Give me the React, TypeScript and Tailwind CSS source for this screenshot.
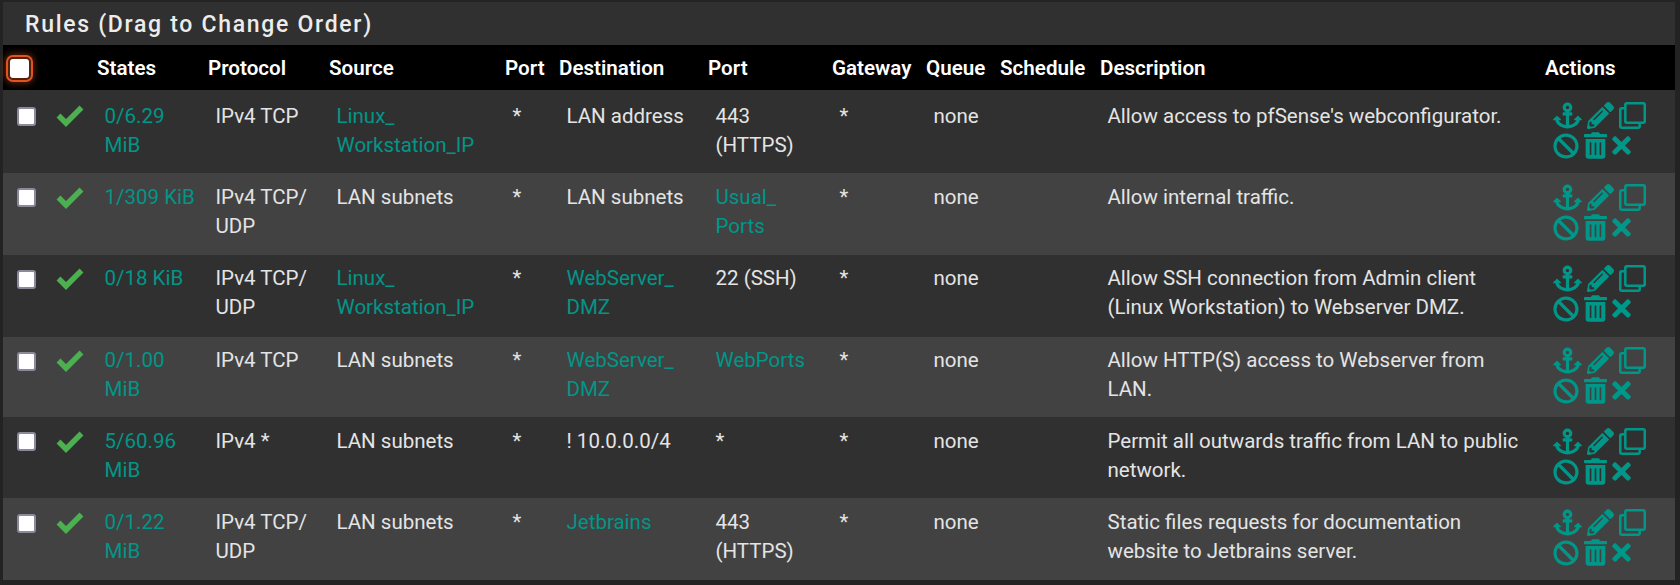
import React from "react";
import { FaAnchor, FaPencilAlt, FaRegClone, FaBan, FaTrashAlt, FaTimes } from "react-icons/fa";

type Cell = { t: string; link?: boolean };
const L = (t: string): Cell => ({ t, link: true });
const T = (t: string): Cell => ({ t });

const rows: Cell[][] = [
  [L("0/6.29\nMiB"), T("IPv4 TCP"), L("Linux_\nWorkstation_IP"), T("*"), T("LAN address"), T("443\n(HTTPS)"), T("*"), T("none"), T(""), T("Allow access to pfSense's webconfigurator.")],
  [L("1/309 KiB"), T("IPv4 TCP/\nUDP"), T("LAN subnets"), T("*"), T("LAN subnets"), L("Usual_\nPorts"), T("*"), T("none"), T(""), T("Allow internal traffic.")],
  [L("0/18 KiB"), T("IPv4 TCP/\nUDP"), L("Linux_\nWorkstation_IP"), T("*"), L("WebServer_\nDMZ"), T("22 (SSH)"), T("*"), T("none"), T(""), T("Allow SSH connection from Admin client\n(Linux Workstation) to Webserver DMZ.")],
  [L("0/1.00\nMiB"), T("IPv4 TCP"), T("LAN subnets"), T("*"), L("WebServer_\nDMZ"), L("WebPorts"), T("*"), T("none"), T(""), T("Allow HTTP(S) access to Webserver from\nLAN.")],
  [L("5/60.96\nMiB"), T("IPv4 *"), T("LAN subnets"), T("*"), T("! 10.0.0.0/4"), T("*"), T("*"), T("none"), T(""), T("Permit all outwards traffic from LAN to public\nnetwork.")],
  [L("0/1.22\nMiB"), T("IPv4 TCP/\nUDP"), T("LAN subnets"), T("*"), L("Jetbrains"), T("443\n(HTTPS)"), T("*"), T("none"), T(""), T("Static files requests for documentation\nwebsite to Jetbrains server.")],
];

const heads = ["States", "Protocol", "Source", "Port", "Destination", "Port", "Gateway", "Queue", "Schedule", "Description", "Actions"];

const rowClass = [
  "h-[83px] bg-[#303030]",
  "h-[82px] bg-[#424242]",
  "h-[82px] bg-[#303030]",
  "h-[80px] bg-[#424242]",
  "h-[81px] bg-[#303030]",
  "h-[82px] bg-[#424242]",
];
const padClass = ["pt-[12px]", "pt-[10px]", "pt-[9px]", "pt-[9px]", "pt-[10px]", "pt-[10px]"];
const boxClass = ["pt-[17px]", "pt-[15px]", "pt-[15px]", "pt-[15px]", "pt-[15px]", "pt-[16px]"];
const checkClass = ["pt-[15px]", "pt-[14px]", "pt-[13px]", "pt-[13px]", "pt-[14px]", "pt-[14px]"];

function Check() {
  return (
    <svg width="28" height="22" viewBox="0 0 28 22" fill="none" stroke="#4caf50" strokeWidth="5.5" strokeLinejoin="miter">
      <polyline points="2.5,10.5 10,18 25.5,2.5" />
    </svg>
  );
}

export default function App() {
  return (
    <div className="w-[1680px] h-[585px] bg-[#232323] pt-[2px] pl-[3px] overflow-hidden font-['Roboto',sans-serif] text-[20.5px] leading-[29px] text-[#e4e4e4]">
      <div className="w-[1672px] h-[578px] bg-[#303030]">
        <h2 className="h-[43px] pl-[22px] pt-[2px] flex items-center text-[23px] font-medium tracking-[1.7px] text-[#ececec]">
          Rules (Drag to Change Order)
        </h2>
        <table className="w-[1672px] table-fixed border-collapse">
          <colgroup>
            <col className="w-[42px]" />
            <col className="w-[52px]" />
            <col className="w-[111px]" />
            <col className="w-[121px]" />
            <col className="w-[176px]" />
            <col className="w-[54px]" />
            <col className="w-[149px]" />
            <col className="w-[124px]" />
            <col className="w-[94px]" />
            <col className="w-[74px]" />
            <col className="w-[100px]" />
            <col className="w-[445px]" />
            <col className="w-[130px]" />
          </colgroup>
          <thead>
            <tr className="h-[45px] bg-black text-white">
              <th className="p-0 pl-[7px] pt-[2px] text-left">
                <span className="block w-[19px] h-[19px] rounded-[3px] bg-white outline-2 outline-offset-2 outline-[#e2541f] shadow-[0_0_7px_5px_rgba(226,84,31,0.45)]" />
              </th>
              <th className="p-0" />
              {heads.map((h, i) => (
                <th key={i} className="p-0 pt-[2px] text-left font-semibold text-[20.6px] whitespace-nowrap">{h}</th>
              ))}
            </tr>
          </thead>
          <tbody>
            {rows.map((r, i) => (
              <tr key={i} className={rowClass[i]}>
                <td className={"p-0 pl-[14px] align-top " + boxClass[i]}>
                  <span className="block w-[19px] h-[19px] rounded-[3px] bg-white border-2 border-[#8a8a9a]" />
                </td>
                <td className={"p-0 pl-[11px] align-top " + checkClass[i]}><Check /></td>
                {r.map((c, j) => (
                  <td key={j} className={"p-0 pl-[7.5px] align-top whitespace-pre-line " + padClass[i] + (c.link ? " text-[#009688]" : "")}>
                    {c.t}
                  </td>
                ))}
                <td className={"p-0 pl-[8px] align-top text-[#009688] " + (i === 0 ? "pt-[11px]" : padClass[i])}>
                  <div className="flex gap-[5px] h-[29px] items-center">
                    <FaAnchor className="w-[29px] h-[29px]" />
                    <FaPencilAlt className="w-[27px] h-[27px]" />
                    <FaRegClone className="w-[27px] h-[27px]" />
                  </div>
                  <div className="flex gap-[5px] h-[31px] items-center">
                    <FaBan className="w-[26px] h-[26px]" />
                    <FaTrashAlt className="w-[23px] h-[27px]" />
                    <FaTimes className="w-[19px] h-[27px]" />
                  </div>
                </td>
              </tr>
            ))}
          </tbody>
        </table>
      </div>
    </div>
  );
}
